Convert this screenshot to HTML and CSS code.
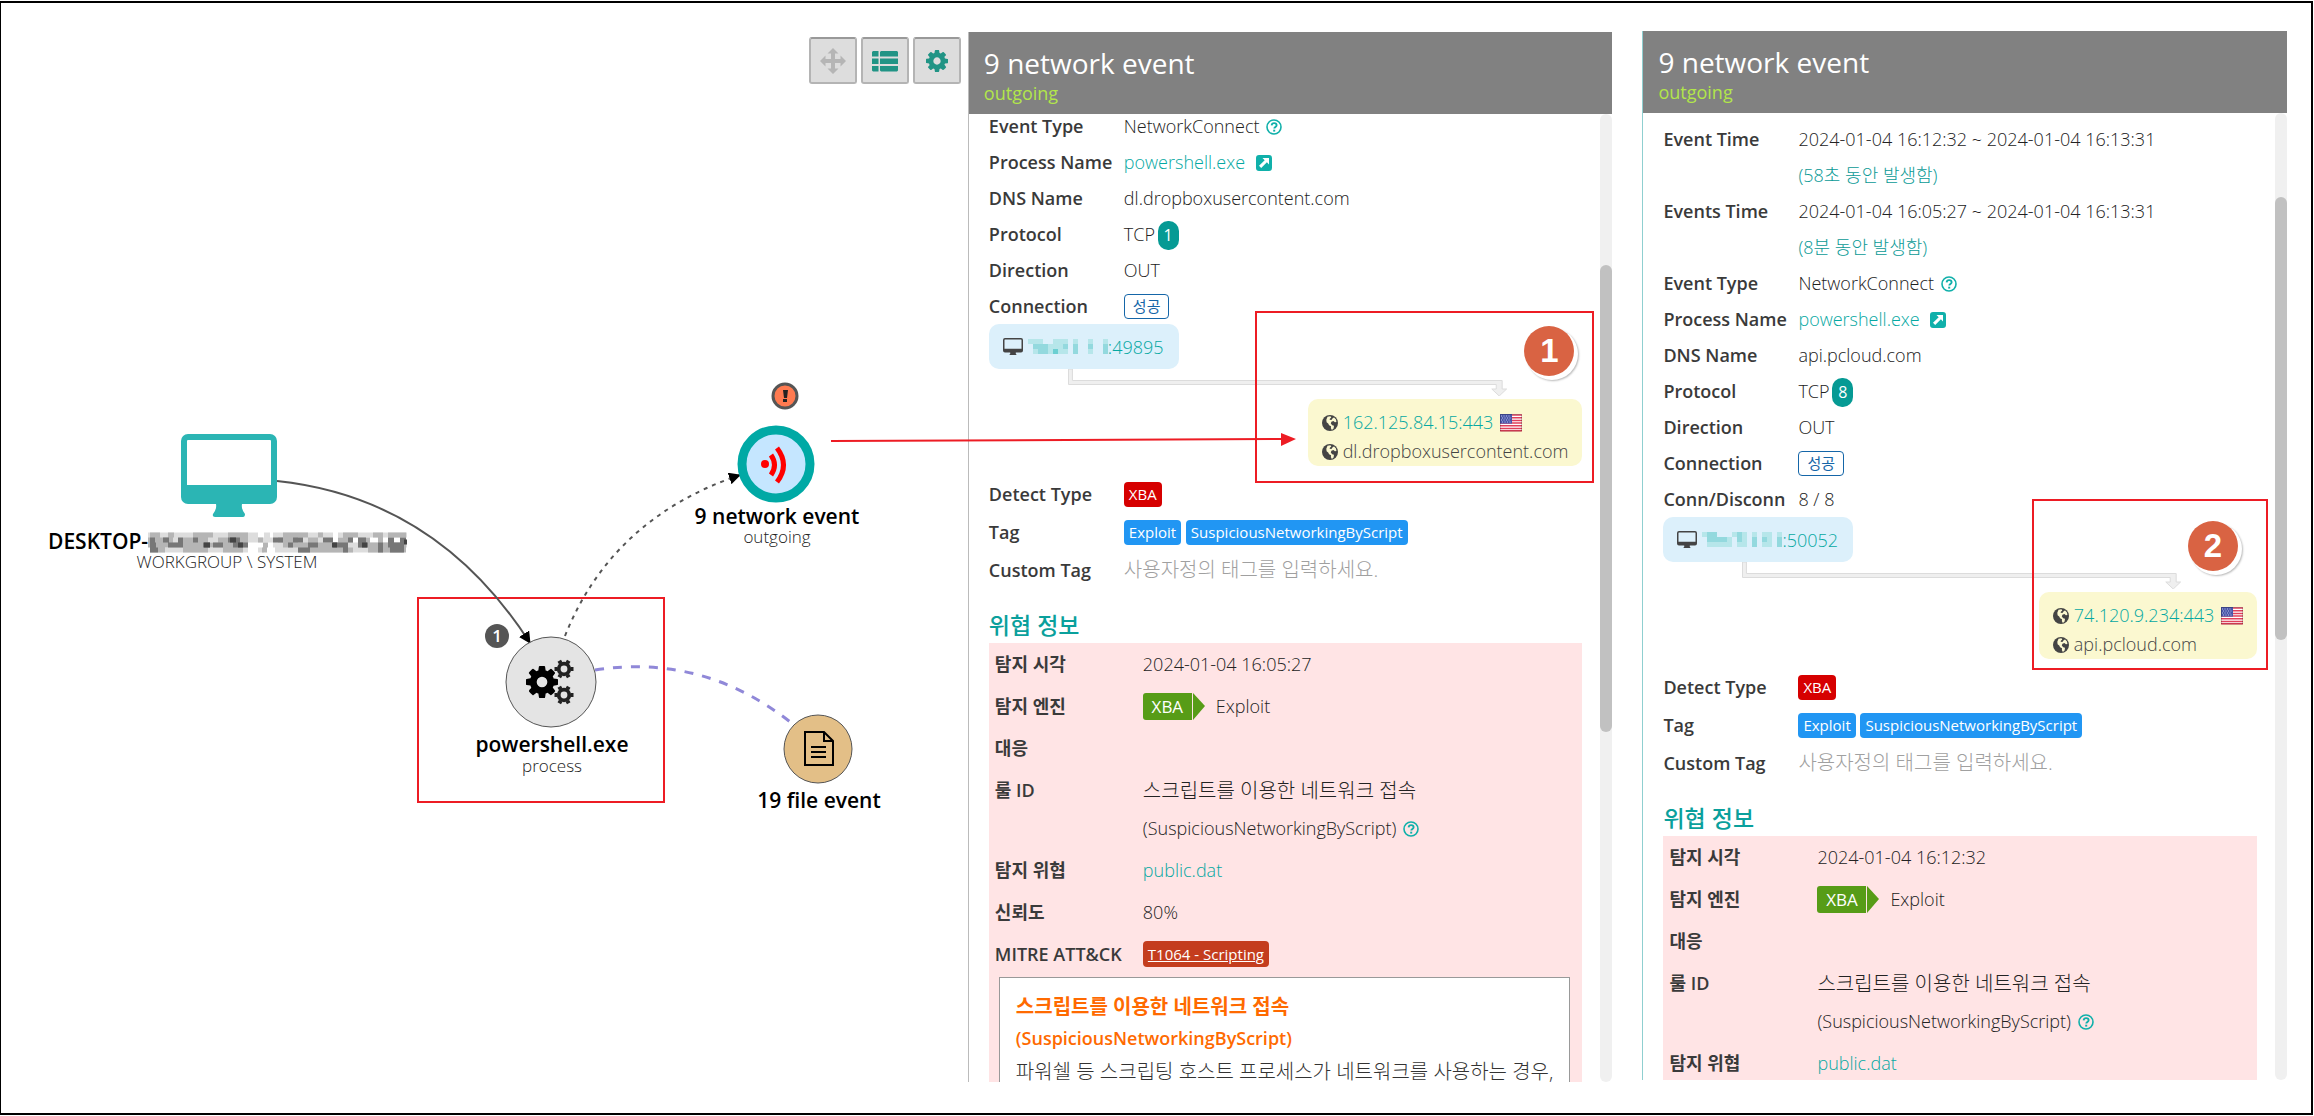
FILE: index.html
```html
<!DOCTYPE html>
<html lang="ko">
<head>
<meta charset="utf-8">
<title>9 network event</title>
<link rel="stylesheet" href="styles.css">
</head>
<body>
<svg class="defs" aria-hidden="true">
  <symbol id="i-cog" viewBox="128 128 1536 1536"><path d="M1152 896q0-106-75-181t-181-75-181 75-75 181 75 181 181 75 181-75 75-181zm512-109v222q0 12-8 23t-20 13l-185 28q-19 54-39 91 35 50 107 138 10 12 10 25t-9 23q-27 37-99 108t-94 71q-12 0-26-9l-138-108q-44 23-91 38-16 136-29 186-7 28-36 28h-222q-14 0-24.500-8.500t-11.500-21.500l-28-184q-49-16-90-37l-141 107q-10 9-25 9-14 0-25-11-126-114-165-168-7-10-7-23 0-12 8-23 15-21 51-66.500t54-70.500q-27-50-41-99l-183-27q-13-2-21-12.500t-8-23.500v-222q0-12 8-23t19-13l186-28q14-46 39-92-40-57-107-138-10-12-10-24 0-10 9-23 26-36 98.500-107.500t94.500-71.500q13 0 26 10l138 107q44-23 91-38 16-136 29-186 7-28 36-28h222q14 0 24.500 8.500t11.500 21.500l28 184q49 16 90 37l142-107q9-9 24-9 13 0 25 10 129 119 165 170 7 8 7 22 0 12-8 23-15 21-51 66.500t-54 70.500q26 50 41 98l183 28q13 2 21 12.500t8 23.500z"/></symbol>
  <symbol id="i-gear6" viewBox="-10 -10 20 20"><circle r="5.300" fill="none" stroke="currentColor" stroke-width="3.800"/><g stroke="currentColor" stroke-width="4"><path d="M-9.500 0h3M6.500 0h3"/><path d="M-9.500 0h3M6.500 0h3" transform="rotate(60)"/><path d="M-9.500 0h3M6.500 0h3" transform="rotate(120)"/></g></symbol>
  <symbol id="i-help" viewBox="0 0 16 16"><circle cx="8" cy="8" r="7" fill="none" stroke="currentColor" stroke-width="1.600"/><path d="M5.600 6.300c.2-1.500 1.200-2.200 2.500-2.200 1.400 0 2.500.8 2.500 2.100 0 1.700-2.200 1.800-2.300 3.300" fill="none" stroke="currentColor" stroke-width="1.900"/><path d="M7.200 10.700h2v1.900h-2z"/></symbol>
  <symbol id="i-open" viewBox="0 0 16 16"><path fill-rule="evenodd" d="M3 0h10a3 3 0 0 1 3 3v10a3 3 0 0 1-3 3H3a3 3 0 0 1-3-3V3a3 3 0 0 1 3-3zM6.500 3l2.200 2.200L3 10.800 5.200 13l5.700-5.700L13 9.500V3z"/></symbol>
  <symbol id="i-pc" viewBox="0 0 20 17"><path fill-rule="evenodd" d="M2 0h16a2 2 0 0 1 2 2v10.500a2 2 0 0 1-2 2h-5.200V16q.7.200.7 1h-7q0-.8.700-1v-1.500H2a2 2 0 0 1-2-2V2a2 2 0 0 1 2-2zM1.500 2v8.800h17V2a.5.5 0 0 0-.5-.5H2a.5.5 0 0 0-.5.500z"/></symbol>
  <symbol id="i-globe" viewBox="0 0 16 16"><circle cx="8" cy="8" r="8"/><path fill="#fbf8d0" d="M5.500 1.800l3-.6.800 1.600-1.300.7-.4 1.300 1.800.2 1.500-2 1.200-.6 1.900 2 .4 2.600-1.500.2-1.500-1.200-2 .7-.6 1.900 1.400 1.600 1.800.6-.4 2.600-1.700 1.600-1-1.800.1-2-1.900-1-.9-1.800-1.600-1.200-.3-2.400z"/></symbol>
  <symbol id="i-flag" viewBox="0 0 22 18"><path fill="#fff" d="M0 0h22v17H0z"/><path stroke="#e0405a" stroke-width="1.500" d="M0 1h22M0 3.700h22M0 6.400h22M0 9.100h22M0 11.800h22M0 14.500h22M0 16.800h22"/><path fill="#4a56a8" d="M0 0h12v9.600H0z"/><path stroke="#b9c0ea" stroke-dasharray="1 1.500" d="M1 2h10M2 4h9M1 6h10M2 8h9"/><path fill="none" stroke="#000" stroke-opacity=".2" d="M.5.500h21v16.500H.5z"/></symbol>
  <symbol id="i-flow" viewBox="0 0 448 27" preserveAspectRatio="none"><path fill="#efefef" stroke="#dcdcdc" d="M.5 0v15.500h433V20h-4.500l7.500 7 7.500-7h-4.500v-8.500H4.500V0z"/></symbol>
</svg>

<div class="page">
  <main class="canvas">
    <div class="toolbar">
      <button class="tool tool--off" type="button" aria-label="Move"><svg viewBox="0 0 26 26"><path d="M13 0l5.500 5.500H15v5.500h5.500V7.500L26 13l-5.500 5.500V15H15v5.500h3.500L13 26l-5.500-5.500H11V15H5.500v3.500L0 13l5.500-5.500V11H11V5.500H7.500z"/></svg></button>
      <button class="tool" type="button" aria-label="List"><svg viewBox="0 0 26 26"><path d="M1 3h5.500v5.500H0V4zM9 3h16l1 1v4.500H8V4zM0 10.500h6.500V16H0zM8 10.500h18V16H8zM0 18h6.500v5.500H1L0 22.500zM8 18h18v4.500l-1 1H9l-1-1z"/></svg></button>
      <button class="tool" type="button" aria-label="Settings"><svg viewBox="0 0 26 26"><use href="#i-cog" x="2" y="2" width="22" height="22"/></svg></button>
    </div>
    <svg class="graph" viewBox="1 3 967 840" width="967" height="840">
      <defs>
        <marker id="tip" viewBox="0 0 12 12" refX="11" refY="6" markerWidth="12" markerHeight="12" markerUnits="userSpaceOnUse" orient="auto"><path d="M0 0l12 6-12 6z"/></marker>
      </defs>
      <rect class="mark" x="418" y="598" width="246" height="204"/>
      <path class="edge" d="M277 481Q437 498 530 643" marker-end="url(#tip)"/>
      <path class="edge edge--dots" d="M565 636Q612 518 740 475" marker-end="url(#tip)"/>
      <path class="edge edge--file" d="M595 670Q705 653 794 725"/>

      <g fill="#2bb5b4">
        <path fill-rule="evenodd" d="M188 434h82a7 7 0 0 1 7 7v56a7 7 0 0 1-7 7h-28q-1 5 3 10 0 3-2 3h-28q-3 0-2-3 4-5 3-10h-28a7 7 0 0 1-7-7v-56a7 7 0 0 1 7-7zm0 6q-1 0-1 1v44h84v-44q0-1-1-1z"/>
      </g>
      <text class="name" x="48" y="549">DESKTOP-</text>
      <g fill="none" stroke-width="5">
        <path stroke="#ddd" d="M148 535h110M264 535h6M273 535h60M338 535h69M148 540h185M273 545h134M158 550h90M258 550h6M275 550h128"/>
        <path stroke="#b5b5b5" d="M150 535h10M168 535h6M193 535h20M228 535h20M283 535h25M318 535h5M343 535h15M373 535h10M388 535h18M148 540h25M183 540h25M218 540h30M258 540h5M278 540h20M308 540h10M338 540h15M358 540h12M378 540h5M148 545h100M263 545h5M283 545h65M358 545h48M150 550h15M183 550h25M223 550h20M262 550h5M298 550h55M368 550h38"/>
        <path stroke="#777" d="M150 540h5M163 540h6M178 540h5M193 540h5M228 540h12M273 540h10M293 540h10M323 540h10M348 540h5M358 540h8M388 540h6M400 540h6M150 545h6M168 545h15M203 545h7M213 545h10M233 545h15M288 545h5M308 545h10M333 545h15M358 545h10M378 545h5M388 545h16M150 550h8M298 550h12M343 550h5M378 550h5M390 550h14"/>
        <path stroke="#444" d="M230 540h6M204 545h6M238 545h5M332 545h5M362 545h5M404 542h3"/>
      </g>
      <text class="sub" x="227" y="568">WORKGROUP \ SYSTEM</text>

      <circle cx="551" cy="682" r="45" fill="#e4e4e4" stroke="#555"/>
      <use href="#i-cog" x="526" y="666" width="32" height="32"/>
      <use href="#i-gear6" x="554" y="659" width="20" height="20"/>
      <use href="#i-gear6" x="554" y="685" width="20" height="20"/>
      <circle cx="497" cy="636" r="12" fill="#555"/>
      <text class="badge" x="497" y="642">1</text>
      <text class="name name--mid" x="552" y="752">powershell.exe</text>
      <text class="sub" x="552" y="772">process</text>

      <circle cx="776" cy="464" r="34" fill="#c5e6ff" stroke="#00a9a5" stroke-width="9"/>
      <circle cx="765" cy="464" r="4" fill="#f00"/>
      <path fill="none" stroke="#f00" stroke-width="5" d="M771 455q7 10 0 20M777 448q13 17 0 34"/>
      <circle cx="785" cy="396" r="12" fill="#ff7a50" stroke="#555" stroke-width="3"/>
      <path d="M783 390h5l-1 8h-3zM783 399h4v3h-4z" fill="#222"/>
      <text class="name name--mid" x="777" y="524">9 network event</text>
      <text class="sub" x="777" y="543">outgoing</text>

      <circle cx="818" cy="749" r="34" fill="#e3bf87" stroke="#555"/>
      <path fill="none" stroke="#000" stroke-width="2" d="M805 732h19l9 9v24h-28zM824 732v9h9M811 747h15M811 752h15M811 757h15"/>
      <text class="name name--mid" x="819" y="808">19 file event</text>

      <path stroke="#ed1c24" stroke-width="2" d="M831 441L1285 439"/>
      <path fill="#ed1c24" d="M1281 433l15 6-15 7z"/>
    </svg>
  </main>

  <section class="panel">
    <header class="head"><h1>9 network event</h1><p>outgoing</p></header>
    <div class="view">
      <div class="content content--scrolled">
        <dl class="rows">
          <dt>Event Type</dt><dd>NetworkConnect <svg class="ic"><use href="#i-help"/></svg></dd>
          <dt>Process Name</dt><dd><a href="#">powershell.exe</a> <svg class="ic ic--open"><use href="#i-open"/></svg></dd>
          <dt>DNS Name</dt><dd>dl.dropboxusercontent.com</dd>
          <dt>Protocol</dt><dd>TCP <span class="count">1</span></dd>
          <dt>Direction</dt><dd>OUT</dd>
          <dt>Connection</dt><dd><span class="tag tag--line">성공</span></dd>
        </dl>
        <div class="flow">
          <div class="host"><svg class="pc"><use href="#i-pc"/></svg>
            <svg class="mosaic" viewBox="0 0 16 3" preserveAspectRatio="none"><path fill="#b6e6ea" d="M0 0h3v1H0zM1 1h5v2H1zM5 0h3v3H5zM9 0h1v3H9zM12 0h1v3h-1zM15 0h1v3h-1z"/><path fill="#93d9de" d="M1 1h3v1H1zM2 2h2v1H2zM7 1h1v1H7zM9 1h1v2H9zM12 1h1v1h-1zM15 1h1v2h-1z"/><path fill="#6ccfd2" d="M5 2h1v1H5z"/></svg><a href="#">:49895</a></div>
          <svg class="wire"><use href="#i-flow"/></svg>
          <div class="remote">
            <div><svg class="globe"><use href="#i-globe"/></svg> <a href="#">162.125.84.15:443</a> <svg class="flag"><use href="#i-flag"/></svg></div>
            <div><svg class="globe"><use href="#i-globe"/></svg> dl.dropboxusercontent.com</div>
          </div>
          <div class="callout callout--one"><b>1</b></div>
        </div>
        <dl class="rows rows--tags">
          <dt>Detect Type</dt><dd><span class="tag tag--red">XBA</span></dd>
          <dt>Tag</dt><dd><span class="tag">Exploit</span> <span class="tag">SuspiciousNetworkingByScript</span></dd>
          <dt><label for="tag1">Custom Tag</label></dt><dd><input id="tag1" type="text" placeholder="사용자정의 태그를 입력하세요."></dd>
        </dl>
        <h2>위협 정보</h2>
        <div class="threat">
          <dl class="facts">
            <dt>탐지 시각</dt><dd>2024-01-04 16:05:27</dd>
            <dt>탐지 엔진</dt><dd><span class="engine">XBA</span>Exploit</dd>
            <dt>대응</dt><dd></dd>
            <dt>룰 ID</dt><dd><span class="ko">스크립트를 이용한 네트워크 접속</span><br>(SuspiciousNetworkingByScript) <svg class="ic"><use href="#i-help"/></svg></dd>
            <dt>탐지 위협</dt><dd><a href="#">public.dat</a></dd>
            <dt>신뢰도</dt><dd>80%</dd>
            <dt>MITRE ATT&amp;CK</dt><dd><a class="tag tag--mitre" href="#">T1064 - Scripting</a></dd>
          </dl>
          <div class="note"><h3><span class="ko">스크립트를 이용한 네트워크 접속</span><br>(SuspiciousNetworkingByScript)</h3><p class="ko">파워쉘 등 스크립팅 호스트 프로세스가 네트워크를 사용하는 경우,</p></div>
        </div>
      </div>
      <div class="bar"><div class="thumb thumb--low"></div></div>
    </div>
  </section>

  <section class="panel panel--second">
    <header class="head"><h1>9 network event</h1><p>outgoing</p></header>
    <div class="view">
      <div class="content">
        <dl class="rows">
          <dt>Event Time</dt><dd>2024-01-04 16:12:32 ~ 2024-01-04 16:13:31<br><span class="span">(58초 동안 발생함)</span></dd>
          <dt>Events Time</dt><dd>2024-01-04 16:05:27 ~ 2024-01-04 16:13:31<br><span class="span">(8분 동안 발생함)</span></dd>
          <dt>Event Type</dt><dd>NetworkConnect <svg class="ic"><use href="#i-help"/></svg></dd>
          <dt>Process Name</dt><dd><a href="#">powershell.exe</a> <svg class="ic ic--open"><use href="#i-open"/></svg></dd>
          <dt>DNS Name</dt><dd>api.pcloud.com</dd>
          <dt>Protocol</dt><dd>TCP <span class="count">8</span></dd>
          <dt>Direction</dt><dd>OUT</dd>
          <dt>Connection</dt><dd><span class="tag tag--line">성공</span></dd>
          <dt>Conn/Disconn</dt><dd>8 / 8</dd>
        </dl>
        <div class="flow">
          <div class="host"><svg class="pc"><use href="#i-pc"/></svg>
            <svg class="mosaic" viewBox="0 0 16 3" preserveAspectRatio="none"><path fill="#b6e6ea" d="M0 0h3v1H0zM1 1h5v2H1zM6 0h3v1H6zM7 1h2v2H7zM10 0h1v3h-1zM12 0h2v3h-2zM15 0h1v3h-1z"/><path fill="#93d9de" d="M1 0h2v2H1zM3 1h2v1H3zM7 0h1v2H7zM10 1h1v2h-1zM12 1h1v1h-1zM15 1h1v2h-1z"/></svg><a href="#">:50052</a></div>
          <svg class="wire"><use href="#i-flow"/></svg>
          <div class="remote">
            <div><svg class="globe"><use href="#i-globe"/></svg> <a href="#">74.120.9.234:443</a> <svg class="flag"><use href="#i-flag"/></svg></div>
            <div><svg class="globe"><use href="#i-globe"/></svg> api.pcloud.com</div>
          </div>
          <div class="callout callout--two"><b>2</b></div>
        </div>
        <dl class="rows rows--tags">
          <dt>Detect Type</dt><dd><span class="tag tag--red">XBA</span></dd>
          <dt>Tag</dt><dd><span class="tag">Exploit</span> <span class="tag">SuspiciousNetworkingByScript</span></dd>
          <dt><label for="tag2">Custom Tag</label></dt><dd><input id="tag2" type="text" placeholder="사용자정의 태그를 입력하세요."></dd>
        </dl>
        <h2>위협 정보</h2>
        <div class="threat">
          <dl class="facts">
            <dt>탐지 시각</dt><dd>2024-01-04 16:12:32</dd>
            <dt>탐지 엔진</dt><dd><span class="engine">XBA</span>Exploit</dd>
            <dt>대응</dt><dd></dd>
            <dt>룰 ID</dt><dd><span class="ko">스크립트를 이용한 네트워크 접속</span><br>(SuspiciousNetworkingByScript) <svg class="ic"><use href="#i-help"/></svg></dd>
            <dt>탐지 위협</dt><dd><a href="#">public.dat</a></dd>
          </dl>
        </div>
      </div>
      <div class="bar"><div class="thumb thumb--high"></div></div>
    </div>
  </section>
</div>
</body>
</html>
```
FILE: styles.css
```css
* { box-sizing: border-box; }

body {
  height: 100vh;
  margin: 0;
  padding: 1px 1px 1px 0;
  overflow: hidden;
  background: #fff;
  color: #222;
  font: 300 18px/36px "Open Sans", "Noto Sans CJK KR", sans-serif;
}

h1, h2, h3, p, dl, dd { margin: 0; }
a { color: #05a8a2; text-decoration: none; }
.defs { position: absolute; width: 0; height: 0; }

.page {
  display: grid;
  grid-template-columns: 3fr 2fr 30px 2fr;
  grid-template-rows: minmax(0, 1fr);
  height: 100%;
  padding-right: 24px;
  border: 2px solid #000;
  border-left-width: 1px;
}

/* event graph */
.canvas { position: relative; min-width: 0; z-index: 1; }
.graph { display: block; overflow: visible; }
.toolbar {
  position: absolute;
  top: 34px;
  right: 7px;
  display: flex;
  gap: 4px;
}
.tool {
  width: 48px;
  height: 47px;
  padding: 0;
  border: 2px solid #b4b4b4;
  border-top-color: #999;
  border-radius: 3px;
  background: #ddd;
  fill: #219485;
}
.tool svg { display: block; width: 26px; height: 26px; margin: 0 auto; }
.tool--off { fill: #b5b5b5; }

.mark { fill: none; stroke: #ed1c24; stroke-width: 2; }
.edge { fill: none; stroke: #555; stroke-width: 2; }
.edge--dots { stroke-dasharray: 4 5; }
.edge--file { stroke: #9088d8; stroke-width: 3; stroke-dasharray: 9 9; }
.name { font-size: 21px; font-weight: 600; fill: #000; }
.sub { font-size: 17px; text-anchor: middle; fill: #222; }
.name--mid { text-anchor: middle; }
.badge { font-size: 17px; font-weight: 600; text-anchor: middle; fill: #fff; }

/* detail panel */
.panel {
  display: flex;
  flex-direction: column;
  min-width: 0;
  margin: 29px 0 31px;
  border-left: 1px solid #bbb;
}
.panel--second { grid-column: 4; margin: 28px 0 33px; border-color: #8fcfd0; }
.head {
  flex: none;
  height: 82px;
  padding: 13px 15px 0;
  background: #818181;
}
.head h1 { color: #fff; font-size: 28px; font-weight: 400; line-height: 36px; }
.head p { color: #b2e64a; font-size: 18px; font-weight: 400; line-height: 24px; }
.view { display: flex; flex: 1; min-height: 0; overflow: hidden; }
.content { flex: 1; min-width: 0; padding: 8px 18px 0 20px; }
.content--scrolled { padding-top: 0; margin-top: -6px; }
.bar { flex: none; width: 12px; border-radius: 6px; background: #f0f0f0; }
.thumb { border-radius: 6px; background: #c1c1c1; }
.thumb--low { height: 467px; margin-top: 151px; }
.thumb--high { height: 443px; margin-top: 84px; }

.rows { display: grid; grid-template-columns: 135px 1fr; }
.rows dt, .facts dt { color: #3a3a3a; font-size: 18px; font-weight: 600; white-space: nowrap; }
.rows--tags { line-height: 38px; }
.span { color: #0a9a96; }
.ic { width: 16px; height: 16px; margin-left: 2px; vertical-align: -2px; color: #10b0aa; fill: currentColor; }
.ic--open { margin-left: 6px; }
.count {
  display: inline-block;
  width: 21px;
  margin-left: -2px;
  border-radius: 10px;
  background: #069a94;
  color: #fff;
  font-size: 16px;
  font-weight: 400;
  line-height: 29px;
  text-align: center;
}
.tag {
  display: inline-block;
  padding: 0 5px;
  border-radius: 4px;
  background: #2196f3;
  color: #fff;
  font-size: 15px;
  font-weight: 400;
  line-height: 25px;
  vertical-align: 1px;
}
.tag--line { padding: 0 8px; border: 1px solid #1566a8; background: #fff; color: #1566a8; line-height: 23px; }
.tag--red { background: #d60000; }
.tag--mitre { background: #c43d1e; text-decoration: underline; }
input {
  display: block;
  width: 100%;
  height: 38px;
  padding: 0;
  border: 0;
  background: none;
  font: inherit;
  font-size: 20px;
}
input::placeholder { color: #a0a0a0; }

/* connection flow */
.flow { position: relative; height: 151px; }
.host {
  display: flex;
  align-items: center;
  width: 190px;
  height: 45px;
  padding-left: 14px;
  border-radius: 10px;
  background: #dcf0fb;
}
.pc { width: 20px; height: 17px; fill: #444; }
.mosaic { width: 80px; height: 15px; margin-left: 5px; }
.wire { position: absolute; top: 45px; left: 79px; width: calc(100% - 151px); height: 27px; }
.remote {
  position: absolute;
  top: 75px;
  right: 0;
  height: 67px;
  padding: 9px 14px 0;
  border-radius: 10px;
  background: #fbf8d0;
  color: #444;
  line-height: 29px;
}
.globe { width: 16px; height: 16px; vertical-align: -2px; fill: #444; }
.flag { width: 22px; height: 18px; margin-left: 2px; vertical-align: -3px; }
.callout { position: absolute; border: 2px solid #ed1c24; }
.callout--one { top: -13px; right: -12px; width: 339px; height: 172px; }
.callout--two { top: -18px; right: -11px; width: 236px; height: 171px; }
.callout b {
  position: absolute;
  top: 13px;
  right: 18px;
  width: 50px;
  height: 50px;
  border-radius: 50%;
  background: #d96343;
  box-shadow: 3px 3px 0 1px #fff, 4px 4px 2px 1px #bbb;
  color: #fff;
  font: 700 33px/50px "Liberation Sans", sans-serif;
  text-align: center;
}
.callout--two b { top: 20px; right: 28px; }

/* threat information */
h2 { padding-top: 19px; color: #0aa09c; font-size: 23px; font-weight: 500; line-height: 35px; }
.threat { padding: 1px 0 0 6px; background: #ffe4e5; }
.facts { display: grid; grid-template-columns: 148px 1fr; line-height: 37px; }
.facts dt, .facts dd { min-height: 42px; padding: 2px 0 3px; }
.ko { font-size: 20px; }
.facts .tag--mitre { line-height: 26px; }
.engine {
  position: relative;
  display: inline-block;
  width: 49px;
  margin-right: 24px;
  border-radius: 3px 0 0 3px;
  background: #579c17;
  color: #fff;
  font-size: 17px;
  font-weight: 400;
  line-height: 27px;
  text-align: center;
}
.engine::after {
  content: "";
  position: absolute;
  top: 0;
  left: 50px;
  border: solid transparent;
  border-width: 13px 0 14px 12px;
  border-left-color: #579c17;
}
.note {
  height: 150px;
  margin: 1px 12px 0 4px;
  padding: 13px 16px;
  border: 1px solid #999;
  background: #fff;
  white-space: nowrap;
}
.note h3 { color: #ff6a00; font-size: 18px; font-weight: 600; line-height: 31px; }
.note p { line-height: 36px; color: #333; }
```
